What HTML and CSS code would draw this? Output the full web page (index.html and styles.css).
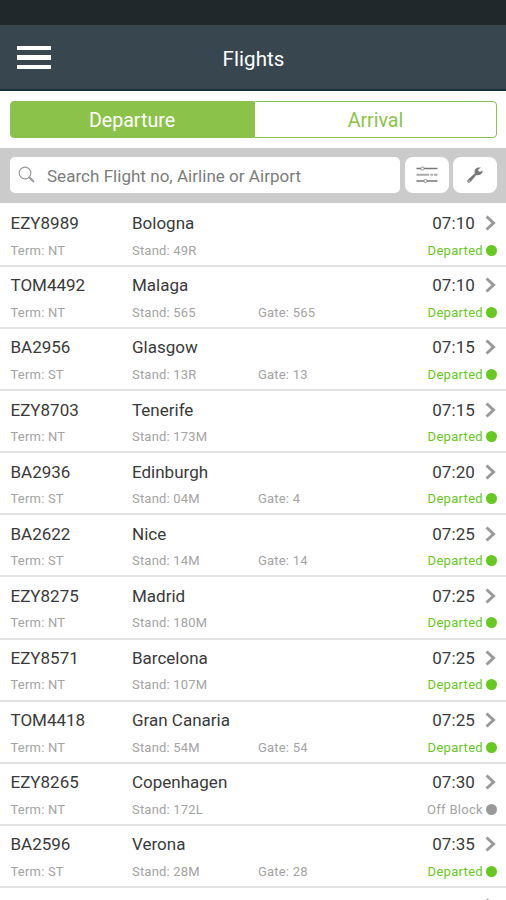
FILE: index.html
```
<!DOCTYPE html>
<html lang="en">
<head>
    <meta charset="UTF-8">
    <meta name="viewport" content="width=device-width, initial-scale=1.0">
    <title>Flights</title>
    <link rel="stylesheet" href="styles.css">
</head>
<body>

<div class="status-bar"></div>
<header class="header">
    <button class="menu-button" aria-label="Menu"><span></span><span></span><span></span></button>
    <h1>Flights</h1>
</header>

<div class="tabs">
    <button class="tab active">Departure</button>
    <button class="tab">Arrival</button>
</div>

<div class="search-bar">
    <div class="search-box">
        <svg width="18" height="18" viewBox="0 0 18 18" fill="none" stroke="#999" stroke-width="1.2">
            <circle cx="7" cy="7" r="5.8"/>
            <path d="M11.2 11.2 L16 16" stroke-width="2"/>
        </svg>
        <span>Search Flight no, Airline or Airport</span>
    </div>
    <button class="tool-button" aria-label="Filter">
        <svg width="22" height="18" viewBox="0 0 22 18" fill="none" stroke="#777" stroke-width="1.3">
            <path d="M0.5 2.5H5M8 2.5H21.5M0.5 15H8M11 15H21.5"/>
            <path d="M0.5 8.8H13M14.5 8.8H17M18 8.8H21.5" stroke="#aaa" stroke-width="2"/>
            <circle cx="6.5" cy="2.5" r="1.6" stroke-width="0.8"/>
            <circle cx="9.5" cy="15" r="1.6" stroke-width="0.8"/>
        </svg>
    </button>
    <button class="tool-button" aria-label="Settings">
        <svg width="16" height="16" viewBox="0 0 16 16">
            <path fill="#777" d="M15.5 3.6 L12.8 5 L11 3.6 L11.5 2.2 L13.9 .8 C12 0 9.6 .4 8.4 2 C7.5 3.3 7.4 4.8 7.9 6.2 L.8 12.7 C0 13.5 0 14.7 .8 15.3 C1.6 16 2.7 15.9 3.4 15.1 L9.4 7.9 C11.3 8.6 13.3 8.1 14.5 6.8 C15.4 5.8 15.8 4.7 15.5 3.6 Z"/>
            <circle cx="2.2" cy="13.9" r=".7" fill="#fff"/>
        </svg>
    </button>
</div>

<div id="flight-list" class="flight-list"></div>

<script src="script.js"></script>
</body>
</html>
```
FILE: styles.css
```
body {
    margin: 0;
    height: 900px;
    overflow: hidden;
    background-color: #fff;
    font-family: Roboto, "Liberation Sans", sans-serif;
}
button {
    border: none;
    padding: 0;
    font-family: inherit;
}
.status-bar {
    height: 25px;
    background-color: #20282b;
}
.header {
    box-sizing: border-box;
    height: 66px;
    display: grid;
    grid-template-columns: 52px 1fr 52px;
    align-items: center;
    background-color: #38474f;
    border-bottom: 2px solid #17323f;
}
.header h1 {
    margin: 4px 0 0 1px;
    text-align: center;
    color: #fff;
    font-size: 20.5px;
    font-weight: 400;
    letter-spacing: 0.1px;
}
.menu-button {
    display: flex;
    flex-direction: column;
    gap: 5px;
    width: 34px;
    margin: 1px 0 0 17px;
    background: none;
}
.menu-button span {
    height: 4.4px;
    background-color: #fff;
}
.tabs {
    display: flex;
    height: 37px;
    padding: 10px 9px 10px 10px;
}
.tab {
    box-sizing: border-box;
    width: 243px;
    padding-top: 2px;
    border: 1px solid #8bc34a;
    border-radius: 0 4px 4px 0;
    background-color: #fff;
    color: #8bc34a;
    font-size: 19.6px;
}
.tab.active {
    width: 244px;
    border-radius: 4px 0 0 4px;
    background-color: #8bc34a;
    color: #fff;
}
.search-bar {
    box-sizing: border-box;
    display: flex;
    gap: 5px;
    height: 55px;
    padding: 9px 9px 10px 10px;
    background-color: #cbcbcb;
}
.search-box {
    display: flex;
    align-items: center;
    width: 390px;
    box-sizing: border-box;
    padding-left: 8px;
    gap: 11px;
    border-radius: 5px;
    background-color: #fff;
    color: #7c7c7c;
    font-size: 17px;
    letter-spacing: 0.03px;
}
.search-box svg {
    margin-bottom: 1px;
}
.search-box span {
    padding-top: 2px;
}
.tool-button {
    display: flex;
    align-items: center;
    justify-content: center;
    width: 44px;
    border-radius: 8px;
    background-color: #fff;
}
.tool-button + .tool-button {
    margin-left: -1px;
}
.flight {
    box-sizing: border-box;
    height: 62.1px;
    padding: 7.4px 9px 0 10.5px;
    display: grid;
    grid-template-columns: 121.5px 126px 1fr auto;
    grid-template-rows: 22px 32px;
    align-items: center;
    border-bottom: 2px solid #e2e2e2;
    color: #3a3a3a;
    font-size: 17px;
}
.flight:first-child {
    height: 64px;
    padding-top: 9px;
}
.flight .city {
    grid-column: 2 / 4;
}
.flight .time {
    display: flex;
    align-items: center;
    justify-content: flex-end;
    gap: 10px;
    letter-spacing: 0.1px;
}
.flight .detail {
    color: #a3a3a3;
    font-size: 13px;
    letter-spacing: 0.2px;
}
.flight .state {
    display: flex;
    align-items: center;
    justify-content: flex-end;
    gap: 3px;
    color: #66c91e;
    font-size: 13px;
    letter-spacing: 0.3px;
}
.flight .state::after {
    content: "";
    width: 11px;
    height: 11px;
    border-radius: 50%;
    background-color: #66c91e;
}
.flight .state.off-block {
    color: #a3a3a3;
}
.flight .state.off-block::after {
    background-color: #999;
}
```
FILE: script.js
```
const flights = [
    ['EZY8989', 'Bologna', '07:10', 'NT', '49R', ''],
    ['TOM4492', 'Malaga', '07:10', 'NT', '565', '565'],
    ['BA2956', 'Glasgow', '07:15', 'ST', '13R', '13'],
    ['EZY8703', 'Tenerife', '07:15', 'NT', '173M', ''],
    ['BA2936', 'Edinburgh', '07:20', 'ST', '04M', '4'],
    ['BA2622', 'Nice', '07:25', 'ST', '14M', '14'],
    ['EZY8275', 'Madrid', '07:25', 'NT', '180M', ''],
    ['EZY8571', 'Barcelona', '07:25', 'NT', '107M', ''],
    ['TOM4418', 'Gran Canaria', '07:25', 'NT', '54M', '54'],
    ['EZY8265', 'Copenhagen', '07:30', 'NT', '172L', '', 'Off Block'],
    ['BA2596', 'Verona', '07:35', 'ST', '28M', '28'],
    ['BA2757', 'Amsterdam', '07:40', 'ST', '12M', '12']
];

const list = document.getElementById('flight-list');

flights.forEach(([number, city, time, term, stand, gate, state = 'Departed']) => {
    const row = document.createElement('div');
    row.classList.add('flight');
    row.innerHTML = `
        <span>${number}</span>
        <span class="city">${city}</span>
        <span class="time">${time}
            <svg width="12" height="16" viewBox="0 0 12 16" fill="none" stroke="#999" stroke-width="3">
                <path d="M1.5 1.5 L8.5 8 L1.5 14.5"/>
            </svg>
        </span>
        <span class="detail">Term: ${term}</span>
        <span class="detail">Stand: ${stand}</span>
        <span class="detail">${gate ? 'Gate: ' + gate : ''}</span>
        <span class="state ${state === 'Off Block' ? 'off-block' : ''}">${state}</span>
    `;
    list.appendChild(row);
});
```
